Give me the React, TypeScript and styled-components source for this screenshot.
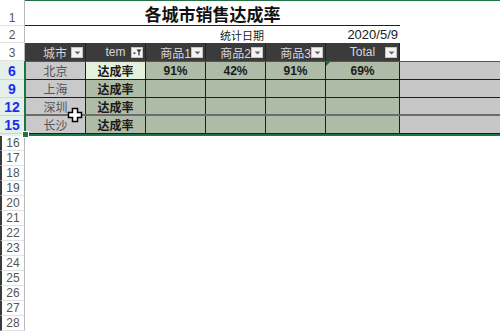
import React from "react";
import styled, { createGlobalStyle } from "styled-components";

const GlobalStyle = createGlobalStyle`
  html, body {
    margin: 0;
    padding: 0;
    background: #ffffff;
  }
  body {
    font-family: "Liberation Sans", "Noto Sans CJK SC", sans-serif;
  }
`;

const COLS = [61, 60, 60, 60, 60, 74];

const Sheet = styled.div`
  position: relative;
  width: 500px;
  height: 333px;
  overflow: hidden;
  background: #ffffff;
  display: flex;
  flex-direction: column;
`;

const TopStrip = styled.div`
  display: flex;
  height: 2px;
  flex-shrink: 0;
`;

const TopHead = styled.div`
  width: 25px;
  border-right: 1px solid #b8b8b8;
  box-sizing: border-box;
`;

const TopLine = styled.div`
  flex: 1;
  height: 1px;
  background: #217346;
`;

const Row = styled.div<{ $h: number }>`
  display: flex;
  height: ${(p) => p.$h}px;
  flex-shrink: 0;
`;

const RowHead = styled.div<{ $left?: boolean }>`
  width: 25px;
  flex-shrink: 0;
  box-sizing: border-box;
  display: flex;
  align-items: flex-end;
  justify-content: center;
  font-size: 12px;
  line-height: 13px;
  color: #555;
  background: #ffffff;
  border-right: 1px solid #b8b8b8;
  border-bottom: 1px solid #e2e2e2;
  border-left: ${(p) => (p.$left ? "2px solid #3a3a3a" : "none")};
  padding-bottom: 0;
`;

const TitleArea = styled.div`
  width: 375px;
  box-sizing: border-box;
  border-bottom: 1px solid #222;
  display: flex;
  align-items: center;
  justify-content: center;
  font-size: 17px;
  font-weight: bold;
  color: #111;
`;

const Plain = styled.div<{ $w: number; $align?: string; $size?: number }>`
  width: ${(p) => p.$w}px;
  flex-shrink: 0;
  box-sizing: border-box;
  display: flex;
  align-items: center;
  justify-content: ${(p) => p.$align || "center"};
  padding: 0 2px;
  font-size: ${(p) => p.$size || 12}px;
  color: #222;
  white-space: nowrap;
`;

const HeadCell = styled.div<{ $w: number }>`
  position: relative;
  width: ${(p) => p.$w}px;
  flex-shrink: 0;
  box-sizing: border-box;
  background: #3b3b3b;
  border-right: 1px solid #232323;
  display: flex;
  align-items: center;
  justify-content: center;
  font-size: 12px;
  color: #d6d6d6;
`;

const FilterBtn = styled.div`
  position: absolute;
  right: 2px;
  top: 4px;
  width: 12px;
  height: 11px;
  background: #f4f4f4;
  border: 1px solid #c4c4c4;
  box-sizing: border-box;
  display: flex;
  align-items: center;
  justify-content: center;
`;

const Filler = styled.div<{ $bg?: string }>`
  flex: 1;
  background: ${(p) => p.$bg || "#ffffff"};
`;

const Block = styled.div`
  display: flex;
  flex-shrink: 0;
`;

const HeadColumn = styled.div`
  display: flex;
  flex-direction: column;
  width: 25px;
  padding: 1px 0 2px;
  background: #e4f1ea;
  box-sizing: border-box;
  border-right: 1px solid #9fc4ae;
`;

const BlueHead = styled.div`
  height: 18px;
  display: flex;
  align-items: flex-end;
  justify-content: center;
  font-size: 14px;
  line-height: 15px;
  font-weight: bold;
  color: #1c2cf0;
  border-bottom: 1px solid #c4dccd;
  box-sizing: border-box;
`;

const Selection = styled.div`
  flex: 1;
  display: flex;
  flex-direction: column;
  border-top: 1px solid #217346;
  border-bottom: 2px solid #217346;
  border-left: 2px solid #217346;
  margin-left: -1px;
  position: relative;
`;

const DataRow = styled.div<{ $thick?: boolean }>`
  display: flex;
  height: 18px;
  box-sizing: border-box;
  border-bottom: ${(p) => (p.$thick ? "2px solid #6c6c6c" : "1px solid #1d1d1d")};
  &:last-child {
    border-bottom: none;
  }
`;

const DataCell = styled.div<{ $w: number; $bg: string; $bold?: boolean; $color?: string }>`
  position: relative;
  width: ${(p) => p.$w}px;
  flex-shrink: 0;
  box-sizing: border-box;
  background: ${(p) => p.$bg};
  border-right: 1px solid #1d1d1d;
  display: flex;
  align-items: center;
  justify-content: center;
  font-size: 12px;
  font-weight: ${(p) => (p.$bold ? "bold" : "normal")};
  color: ${(p) => p.$color || "#1a1a1a"};
`;

const Marker = styled.div`
  position: absolute;
  left: 0;
  top: 0;
  width: 0;
  height: 0;
  border-top: 4px solid #1e6a3a;
  border-right: 4px solid transparent;
`;

const FillHandle = styled.div`
  position: absolute;
  left: -4px;
  bottom: -4px;
  width: 5px;
  height: 5px;
  background: #217346;
  border: 1px solid #ffffff;
`;

const Cursor = styled.svg`
  position: absolute;
  left: 67px;
  top: 107px;
`;

const Arrow = () => (
  <svg width="7" height="4" viewBox="0 0 7 4">
    <path d="M0.5 0.5 L6.5 0.5 L3.5 3.5 Z" fill="#666" />
  </svg>
);

const FunnelArrow = () => (
  <svg width="9" height="7" viewBox="0 0 9 7">
    <path d="M0 3.5 L3 3.5 L1.5 5.5 Z" fill="#333" />
    <path d="M3.5 0.5 L8.5 0.5 L6.6 3 L6.6 6.5 L5.4 6.5 L5.4 3 Z" fill="#333" />
  </svg>
);

const headers = ["城市", "tem", "商品1", "商品2", "商品3", "Total"];

type DataRowType = {
  num: number;
  city: string;
  values: string[];
};

const rows: DataRowType[] = [
  { num: 6, city: "北京", values: ["91%", "42%", "91%", "69%"] },
  { num: 9, city: "上海", values: ["", "", "", ""] },
  { num: 12, city: "深圳", values: ["", "", "", ""] },
  { num: 15, city: "长沙", values: ["", "", "", ""] },
];

const lowerRows = Array.from({ length: 13 }, (_, i) => 16 + i);

function App() {
  return (
    <>
      <GlobalStyle />
      <Sheet>
        <TopStrip>
          <TopHead />
          <TopLine />
        </TopStrip>

        <Row $h={24}>
          <RowHead>1</RowHead>
          <TitleArea>各城市销售达成率</TitleArea>
          <Filler />
        </Row>

        <Row $h={17}>
          <RowHead>2</RowHead>
          <Plain $w={COLS[0] + COLS[1] + COLS[2]} />
          <Plain $w={COLS[3]} $align="flex-end" $size={11}>
            统计日期
          </Plain>
          <Plain $w={COLS[4]} />
          <Plain $w={COLS[5]} $align="flex-end" $size={13}>
            2020/5/9
          </Plain>
          <Filler />
        </Row>

        <Row $h={18}>
          <RowHead>3</RowHead>
          {headers.map((h, i) => (
            <HeadCell key={h} $w={COLS[i]}>
              {h}
              <FilterBtn>{i === 1 ? <FunnelArrow /> : <Arrow />}</FilterBtn>
            </HeadCell>
          ))}
          <Filler />
        </Row>

        <Block>
          <HeadColumn>
            {rows.map((r) => (
              <BlueHead key={r.num}>{r.num}</BlueHead>
            ))}
          </HeadColumn>
          <Selection>
            {rows.map((r, i) => (
              <DataRow key={r.num} $thick={i === 2}>
                <DataCell $w={COLS[0] - 1} $bg="#c9c9c9" $color="#555">
                  {r.city}
                </DataCell>
                <DataCell $w={COLS[1]} $bg={i === 0 ? "#e3f0dc" : "#aebba6"} $bold>
                  达成率
                </DataCell>
                {r.values.map((v, j) => (
                  <DataCell key={j} $w={COLS[2 + j]} $bg="#aebba6" $bold>
                    {j === 3 && i === 0 && <Marker />}
                    {v}
                  </DataCell>
                ))}
                <Filler $bg="#c7c7c7" />
              </DataRow>
            ))}
            <FillHandle />
          </Selection>
        </Block>

        {lowerRows.map((n) => (
          <Row key={n} $h={15}>
            <RowHead $left>{n}</RowHead>
            <Filler />
          </Row>
        ))}

        <Cursor width="16" height="16" viewBox="0 0 16 16">
          <path
            d="M5.5 1.5 H10.5 V5.5 H14.5 V10.5 H10.5 V14.5 H5.5 V10.5 H1.5 V5.5 H5.5 Z"
            fill="#ffffff"
            stroke="#000000"
            strokeWidth="1.5"
          />
        </Cursor>
      </Sheet>
    </>
  );
}

export default App;
